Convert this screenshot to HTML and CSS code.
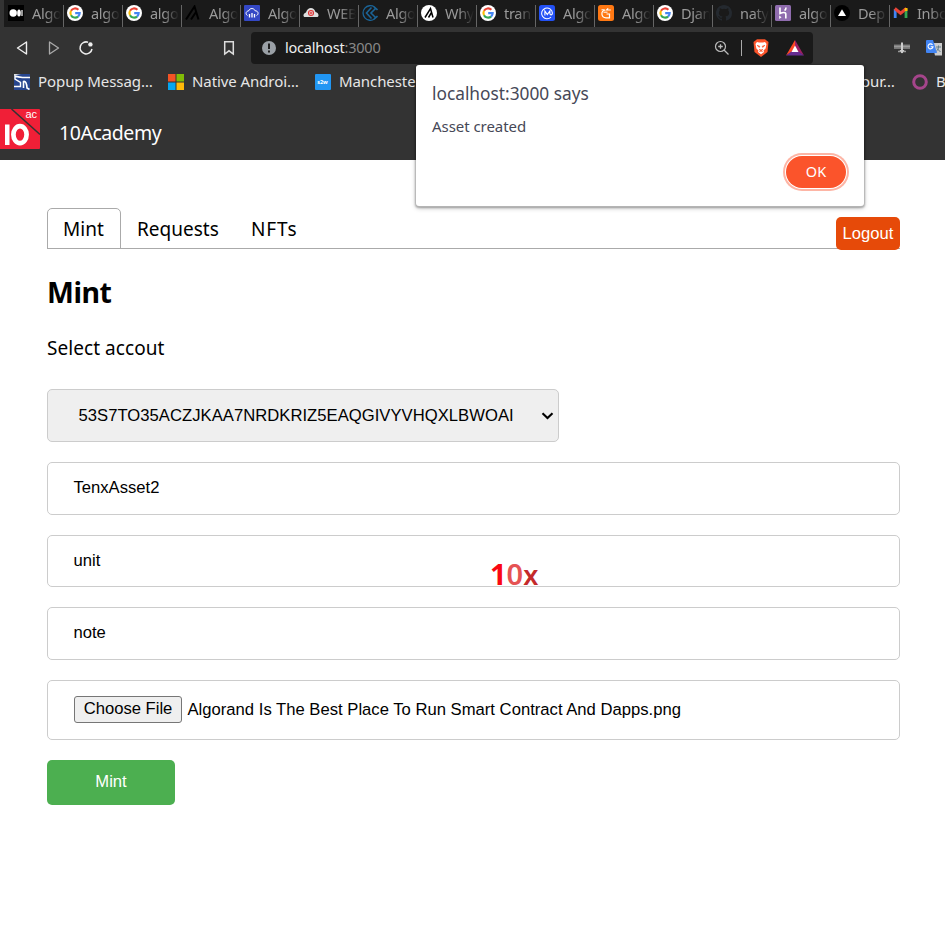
FILE: index.html
```html
<!DOCTYPE html>
<html lang="en">
<head>
<meta charset="utf-8">
<title>10Academy</title>
<link rel="stylesheet" href="styles.css">
</head>
<body>
<svg class="defs" width="0" height="0">
  <symbol id="google" viewBox="0 0 16 16">
    <circle cx="8" cy="8" r="8" fill="#fff"/>
    <g fill="none" stroke-width="2.1">
      <path d="M4 5.8A4.7 4.7 0 0 1 11.4 4.8" stroke="#ea4335"/>
      <path d="M4 10.2A4.7 4.7 0 0 1 4 5.8" stroke="#fbbc05"/>
      <path d="M4 10.2A4.7 4.7 0 0 0 11.1 11.6" stroke="#34a853"/>
      <path d="M8.2 8.1H12.7A4.7 4.7 0 0 1 11.1 11.6" stroke="#4285f4"/>
    </g>
  </symbol>
</svg>
<header class="browser">
  <nav class="strip">
    <div class="tab"><svg viewBox="0 0 16 16"><rect width="16" height="16" fill="#000"/><circle cx="5.2" cy="8" r="3.7" fill="#fff"/><ellipse cx="11" cy="8" rx="1.8" ry="3.5" fill="#fff"/><path d="M14 5v6" stroke="#fff" stroke-width="1.2"/></svg><span>Algo</span></div>
    <div class="tab"><svg><use href="#google"/></svg><span>algo</span></div>
    <div class="tab"><svg><use href="#google"/></svg><span>algo</span></div>
    <div class="tab"><svg viewBox="0 0 16 16"><path d="M1 14.5L9.5 1.5L13.500 14.500M6 14.500L11 7" fill="none" stroke="#000" stroke-width="2"/></svg><span>Algo</span></div>
    <div class="tab"><svg viewBox="0 0 16 16"><rect width="16" height="16" rx="1" fill="#3448c5"/><path d="M3.500 10.500C1 9 2 6 4.500 6C6 2.500 10 3 11.200 5.800C14.500 5.800 15 9.500 12.500 10.500" fill="none" stroke="#fff" stroke-width="1"/><path d="M5.500 9v3.500M8 8v4.500M10.500 9v3.500" stroke="#fff" stroke-width="1.300"/></svg><span>Algo</span></div>
    <div class="tab"><svg viewBox="0 0 16 16"><path d="M2 12C-.5 12 .2 8 3 7.500C4 2 11 1 12.500 7C16.500 8 16 12 14 12Z" fill="#ddd"/><circle cx="8" cy="8" r="2.500" fill="#eee" stroke="#d33" stroke-width="1.100"/><path d="M8 6.500v3M6.500 8h3" stroke="#d33"/></svg><span>WEB</span></div>
    <div class="tab"><svg viewBox="0 0 16 16"><path d="M12.500 2A7.300 7.300 0 1 0 12.500 14" fill="none" stroke="#1b6497" stroke-width="1.300"/><path d="M9.500 2.500L4.500 8L9.500 13.500M13.500 3.500L9 8L13.500 12.500M12 1.800L15.500 5M12 14.200L15.500 11" fill="none" stroke="#1b6497" stroke-width="1.600"/></svg><span>Algo</span></div>
    <div class="tab"><svg viewBox="0 0 16 16"><circle cx="8" cy="8" r="8" fill="#fff"/><path d="M4 12.500L9.500 3.500L12 12.500M7.500 12.500L10.500 7.500" fill="none" stroke="#000" stroke-width="1.500"/></svg><span>Why</span></div>
    <div class="tab"><svg><use href="#google"/></svg><span>tran</span></div>
    <div class="tab"><svg viewBox="0 0 16 16"><rect width="16" height="16" rx="2.500" fill="#2351f5"/><path d="M12 12A5.400 5.400 0 1 1 13.400 8C13.400 10.500 11 10.300 10.900 8.500V6L8.300 9.500L5.900 6V10.500" fill="none" stroke="#fff" stroke-width="1.100"/></svg><span>Algo</span></div>
    <div class="tab"><svg viewBox="0 0 16 16"><rect width="16" height="16" rx="2.500" fill="#ff7813"/><path d="M12.800 5H8.500L10.200 3.300M7 5C2.500 6 3 12.800 8 12.800H11.500V9H8.500" fill="none" stroke="#fff" stroke-width="1.200"/><path d="M5.500 7.200h4M3.500 4.800h3" stroke="#fff"/></svg><span>Algo</span></div>
    <div class="tab"><svg><use href="#google"/></svg><span>Djan</span></div>
    <div class="tab"><svg viewBox="0 0 16 16"><path fill="#24292f" d="M8 0C3.580 0 0 3.580 0 8c0 3.540 2.290 6.530 5.470 7.590.4.070.55-.17.55-.38 0-.19-.010-.82-.010-1.490-2.010.37-2.530-.49-2.690-.94-.09-.23-.48-.94-.82-1.130-.28-.15-.68-.52-.010-.53.63-.010 1.080.58 1.230.82.72 1.210 1.870.87 2.330.66.070-.52.28-.87.51-1.070-1.780-.2-3.640-.89-3.640-3.950 0-.87.31-1.590.82-2.150-.08-.2-.36-1.020.08-2.120 0 0 .67-.21 2.200.82a7.600 7.600 0 0 1 4 0c1.530-1.040 2.200-.82 2.200-.82.44 1.100.16 1.920.08 2.120.51.56.82 1.270.82 2.150 0 3.070-1.870 3.750-3.650 3.950.29.25.54.73.54 1.480 0 1.070-.010 1.930-.010 2.200 0 .21.15.46.55.38A8 8 0 0 0 16 8c0-4.420-3.580-8-8-8z"/></svg><span>naty</span></div>
    <div class="tab"><svg viewBox="0 0 16 16"><rect width="16" height="16" rx="1.500" fill="#8f6cae"/><path d="M5 2.500V8.500C7.500 7.300 10.800 6.800 10.800 9V13.500M11 2.500C11 4 10.300 5 9.500 5.500" fill="none" stroke="#fff" stroke-width="1.600"/><path d="M4.200 10.500L6.500 12.200L4.200 14Z" fill="#fff"/></svg><span>algo</span></div>
    <div class="tab"><svg viewBox="0 0 16 16"><circle cx="8" cy="8" r="8" fill="#000"/><path d="M8 4.200L12 11H4Z" fill="#fff"/></svg><span>Dep</span></div>
    <div class="tab"><svg viewBox="0 0 16 16"><path d="M2.200 13V4" stroke="#4285f4" stroke-width="2.800"/><path d="M13 13V4" stroke="#34a853" stroke-width="2.800"/><path d="M1.800 3.500L7.600 8.200L13.400 3.500" fill="none" stroke="#ea4335" stroke-width="3"/><path d="M13.100 3v3" stroke="#fbbc04" stroke-width="2.800"/></svg><span>Inbo</span></div>
  </nav>
  <div class="toolbar">
    <svg class="back" viewBox="0 0 16 16"><path d="M12.500 2V14L3.500 8Z" fill="none" stroke="#eee" stroke-width="1.400" stroke-linejoin="round"/></svg>
    <svg class="forward" viewBox="0 0 16 16"><path d="M3.500 2V14L12.500 8Z" fill="none" stroke="#aaa" stroke-width="1.300" stroke-linejoin="round"/></svg>
    <svg class="reload" viewBox="0 0 16 16"><path d="M10 2.200A6 6 0 1 0 14 9" fill="none" stroke="#eee" stroke-width="1.500"/><circle cx="12.400" cy="4.400" r="2.200" fill="#eee"/></svg>
    <svg class="mark" viewBox="0 0 16 16"><path d="M3.700 1.700H12.300V14L8 10.800L3.700 14Z" fill="none" stroke="#ddd" stroke-width="1.500"/></svg>
    <div class="address">
      <svg class="info" viewBox="0 0 16 16"><circle cx="8" cy="8" r="7" fill="#9aa0a6"/><path d="M8 3.500v5.500M8 10.500v2" stroke="#1a1a1a" stroke-width="1.900"/></svg>
      <span class="host">localhost<span class="port">:3000</span></span>
      <svg class="lens" viewBox="0 0 16 16"><circle cx="6.500" cy="6.500" r="5" fill="none" stroke="#bbb" stroke-width="1.200"/><path d="M10 10L14.500 14.500M4.200 6.500h4.600M6.500 4.200v4.600" stroke="#bbb" stroke-width="1.300"/></svg>
      <i class="bar"></i>
      <svg class="lion" viewBox="0 0 16 18"><path d="M4 .3H12L15.500 3L14.500 13L8 18L1.500 13L.5 3Z" fill="#fb542b"/><path d="M4 3L6 3.500H10L12 3L13.500 5L12.600 9.500L10.500 11.500L11 13L8 15.300L5 13L5.500 11.500L3.400 9.500L2.500 5Z" fill="#fff"/><path d="M4 6.300L6.800 7.200L6.300 8.400ZM12 6.300L9.200 7.200L9.700 8.400ZM6 10.500L8 11.500L10 10.500L8 11ZM6.500 12.500L8 11.600L9.500 12.500L8 12Z" fill="#fb542b" stroke="#fb542b" stroke-width=".6"/></svg>
      <svg class="bat" viewBox="0 0 18 16"><path d="M9 0L0 15.500L9 10Z" fill="#ff4724"/><path d="M9 0L18 15.500L9 10Z" fill="#9e1f63"/><path d="M0 15.500H18L9 9Z" fill="#662d91"/><path d="M9 5.500L12.500 12H5.500Z" fill="#fff"/></svg>
    </div>
    <svg class="plane" viewBox="0 0 16 16"><path d="M0 4.500H16V9H0Z" fill="#777"/><path d="M0 6.500H16M4 11.500H12" stroke="#999" stroke-width="1.500"/><path d="M8 2.500V13" stroke="#ccc" stroke-width="2"/><path d="M5.500 10H10.500L8 13.500Z" fill="#ccc"/></svg>
    <svg class="translate" viewBox="0 0 16 16"><path d="M6 3H16V15.500H9Z" fill="#ccc"/><path d="M10 7h5M12.500 5.500V7C12.500 10 10.500 11 10 11.500M11 8.500L14.500 12" stroke="#607d8b" fill="none"/><path d="M1 0H7L11 13H1Q0 13 0 12V1Q0 0 1 0Z" fill="#4285f4"/><path d="M6.500 4.800A2.500 2.500 0 1 0 7 6.800H4.700" fill="none" stroke="#fff" stroke-width="1.100"/></svg>
  </div>
  <div class="bookmarks">
    <svg viewBox="0 0 16 16"><rect width="16" height="16" fill="#27468f"/><path d="M0 0H7L0 1.500Z" fill="#ddd"/><path d="M16 3.500H8.500Q4 3 1 2V5L6.500 8.500V12.500H0" fill="none" stroke="#fff" stroke-width="1.400"/><path d="M9.500 14V7.500Q12.500 6.500 13 14L15.500 15.500" fill="none" stroke="#fff" stroke-width="1.600"/></svg><span class="b1">Popup Messag…</span>
    <svg viewBox="0 0 16 16"><path d="M0 0h7.500v7.500H0z" fill="#f35325"/><path d="M8.500 0H16v7.500H8.500z" fill="#81bc06"/><path d="M0 8.500h7.500V16H0z" fill="#05a6f0"/><path d="M8.500 8.500H16V16H8.500z" fill="#ffba08"/></svg><span class="b2">Native Androi…</span>
    <svg viewBox="0 0 16 16"><rect width="16" height="16" rx="1" fill="#2196f3"/><text x="2.300" y="9.800" class="s2w">s2w</text></svg><span class="b3">Manchester</span>
    <span class="b4">our…</span>
    <svg viewBox="0 0 16 16"><circle cx="8" cy="8" r="6.300" fill="none" stroke="#a5458b" stroke-width="3"/></svg><span>B</span>
  </div>
</header>
<div class="brand">
  <svg viewBox="0 0 40 40"><rect x="-2" width="42" height="40" rx="1" fill="#f01f37"/><path d="M11.500 0L40 25.500" stroke="#333" stroke-width="1.500"/><path d="M5 15.500H9.500V36H5Z" fill="#fff"/><ellipse cx="20" cy="25.600" rx="6.600" ry="8.500" fill="none" stroke="#fff" stroke-width="4.700"/><text x="25.500" y="9.200" class="ac">ac</text></svg>
  <span>10Academy</span>
</div>
<main>
  <div class="tabs">
    <a class="on"><span>Mint</span></a><a class="req"><span>Requests</span></a><a class="nft"><span>NFTs</span></a>
    <button class="logout">Logout</button>
  </div>
  <h1>Mint</h1>
  <p>Select accout</p>
  <form>
    <div class="field account"><span>53S7TO35ACZJKAA7NRDKRIZ5EAQGIVYVHQXLBWOAI</span><svg viewBox="0 0 12 8"><path d="M1 1.200L6 6L11 1.200" fill="none" stroke="#000" stroke-width="2.100"/></svg></div>
    <div class="field f1">TenxAsset2</div>
    <div class="field f2">unit<b class="mark10"><i>1</i><i>0</i><i>x</i></b></div>
    <div class="field f3">note</div>
    <div class="field file"><button type="button">Choose File</button><span>Algorand Is The Best Place To Run Smart Contract And Dapps.png</span></div>
    <button class="submit" type="button">Mint</button>
  </form>
</main>
<div class="dialog">
  <h2><span>localhost:3000 says</span></h2>
  <div class="msg"><span>Asset created</span></div>
  <button>OK</button>
</div>
</body>
</html>
```
FILE: styles.css
```css
* { box-sizing: border-box; }
body {
  margin: 0;
  width: 945px;
  height: 936px;
  overflow: hidden;
  background: #fff;
  color: #000;
  font-family: "Noto Sans", sans-serif;
}
svg { display: block; flex: none; }
button { font-family: "Liberation Sans", sans-serif; padding: 0; }
.defs { position: absolute; }

.browser { height: 100px; background: #333; overflow: hidden; }
.strip { display: flex; height: 27px; margin-left: 4px; padding-left: 1px; background: #1a1a1a; overflow: hidden; }
.tab {
  flex: none;
  display: flex;
  width: 59px;
  height: 22px;
  margin-top: 5px;
  padding-left: 3px;
  border-right: 1px solid #666;
}
.tab svg { width: 16px; height: 16px; }
.tab span {
  width: 29px;
  margin-left: 8px;
  overflow: hidden;
  white-space: nowrap;
  color: #9a9a9a;
  font-size: 14.5px;
  line-height: 16px;
  height: 20px;
  letter-spacing: -.3px;
  -webkit-mask-image: linear-gradient(90deg, #000 45%, transparent);
  mask-image: linear-gradient(90deg, #000 45%, transparent);
}

.toolbar { display: flex; align-items: center; height: 38px; padding-top: 4px; }
.toolbar > svg { width: 16px; height: 16px; }
.back { margin-left: 14px; }
.forward, .reload { margin-left: 16px; }
.mark { margin-left: 127px; }
.address { display: flex; align-items: center; width: 562px; height: 32px; margin-left: 14px; padding-left: 10px; border-radius: 4px; background: #1a1a1a; }
.info { width: 16px; height: 16px; }
.host { width: 429px; margin: -2px 0 0 8px; color: #eee; font-size: 14.5px; letter-spacing: -.2px; }
.port { color: #888; }
.lens { width: 16px; height: 16px; }
.bar { width: 1px; height: 16px; margin-left: 11px; background: #aaa; }
.lion { width: 16px; height: 18px; margin-left: 11px; }
.bat { width: 18px; height: 16px; margin-left: 17px; }
.toolbar .plane { margin-left: 81px; }
.toolbar .translate { margin-left: 16px; }

.bookmarks { display: flex; align-items: center; height: 34px; padding-left: 14px; color: #e6e6e6; font-size: 15px; letter-spacing: -.08px; white-space: nowrap; }
.bookmarks svg { width: 16px; height: 16px; }
.bookmarks span { flex: none; margin: -2px 0 0 8px; }
.bookmarks .b1 { width: 130px; }
.bookmarks .b2 { width: 123px; }
.bookmarks .b3 { width: 120px; }
.bookmarks .b4 { width: 51px; margin-left: 402px; }
.s2w { fill: #fff; font: bold 5.5px "Noto Sans", sans-serif; }

.brand { display: flex; height: 60px; padding-top: 9px; background: #333; color: #fff; font-size: 19.5px; line-height: 47px; letter-spacing: -.45px; }
.brand svg { width: 40px; height: 40px; }
.brand span { margin-left: 19px; }
.ac { fill: #fff; font: 11px "Liberation Sans", sans-serif; letter-spacing: 0; }

main { padding: 48px 45px 0 47px; }
.tabs { display: flex; height: 41px; border-bottom: 1px solid #aaa; font-size: 19px; line-height: 42px; }
.tabs a { height: 40px; }
.tabs .on { width: 74px; height: 41px; padding-left: 15px; border: 1px solid #aaa; border-radius: 5px 5px 0 0; line-height: 41px; }
.tabs .req { width: 114px; padding-left: 16px; }
.tabs .nft { padding-left: 16px; letter-spacing: .9px; }
.logout { width: 64px; height: 33px; margin: 9px 0 0 auto; border: 0; border-radius: 5px; background: #e64a09; color: #fff; font-size: 16.6px; }
h1 { height: 40px; margin: 24px 0 0; font-size: 28.5px; line-height: 39px; letter-spacing: -.5px; }
p { height: 30px; margin: 20px 0 26px; font-size: 19px; line-height: 30px; letter-spacing: .06px; }
.field {
  display: flex;
  align-items: center;
  position: relative;
  height: 53px;
  margin-bottom: 20px;
  padding: 0 0 2px 25.5px;
  border: 1px solid #ccc;
  border-radius: 5px;
  font: 16.64px "Liberation Sans", sans-serif;
  white-space: nowrap;
}
.account { width: 512px; padding: 0 4px 0 30.500px; background: #efefef; justify-content: space-between; }
.account span { letter-spacing: .03px; }
.account svg { width: 13px; height: 8px; }
.f2 { height: 52px; padding-bottom: 0; }
.file { height: 60px; padding-bottom: 0; padding-left: 26px; }
.file button { width: 108px; height: 27px; margin: -2px 6px 0 0; border: 1px solid #767676; border-radius: 3px; background: #efefef; color: #000; font-size: 16.64px; }
.file span { margin-left: -.5px; letter-spacing: .01px; }
.submit { display: block; width: 128px; height: 45px; padding-bottom: 2px; border: 0; border-radius: 5px; background: #4caf50; color: #fff; font-size: 16.64px; }
.mark10 { position: absolute; left: 442px; top: 16px; display: flex; align-items: baseline; font: bold 29px/44px "Noto Sans", sans-serif; }
.mark10 i { font-style: normal; color: #fa0713; }
.mark10 i + i { font-weight: 600; color: #e55353; }
.mark10 i:last-child { color: #c42a2a; font-size: 27px; }

.dialog {
  position: absolute;
  left: 416px;
  top: 65px;
  width: 448px;
  height: 141px;
  padding: 17px 16px 16px;
  border-radius: 3px;
  background: #fff;
  color: #464857;
  box-shadow: 0 1px 0 0 #b4b4b4, 0 1px 2px 1px rgba(0,0,0,.25), 0 2px 5px rgba(0,0,0,.25);
}
h2 { height: 24px; margin: 0 0 8px; font-size: 17.3px; font-weight: 400; line-height: 24px; }
.msg { height: 25px; font-size: 15px; line-height: 24px; letter-spacing: -.05px; }
.dialog button {
  position: absolute;
  right: 18px;
  bottom: 18px;
  width: 60px;
  height: 32px;
  padding-bottom: 2px;
  border: 0;
  border-radius: 16px;
  background: #fb542b;
  color: #fff;
  font: 14.5px "Noto Sans", sans-serif;
  box-shadow: 0 0 0 1px #fff, 0 0 0 3px #fdb5a5;
}
```
